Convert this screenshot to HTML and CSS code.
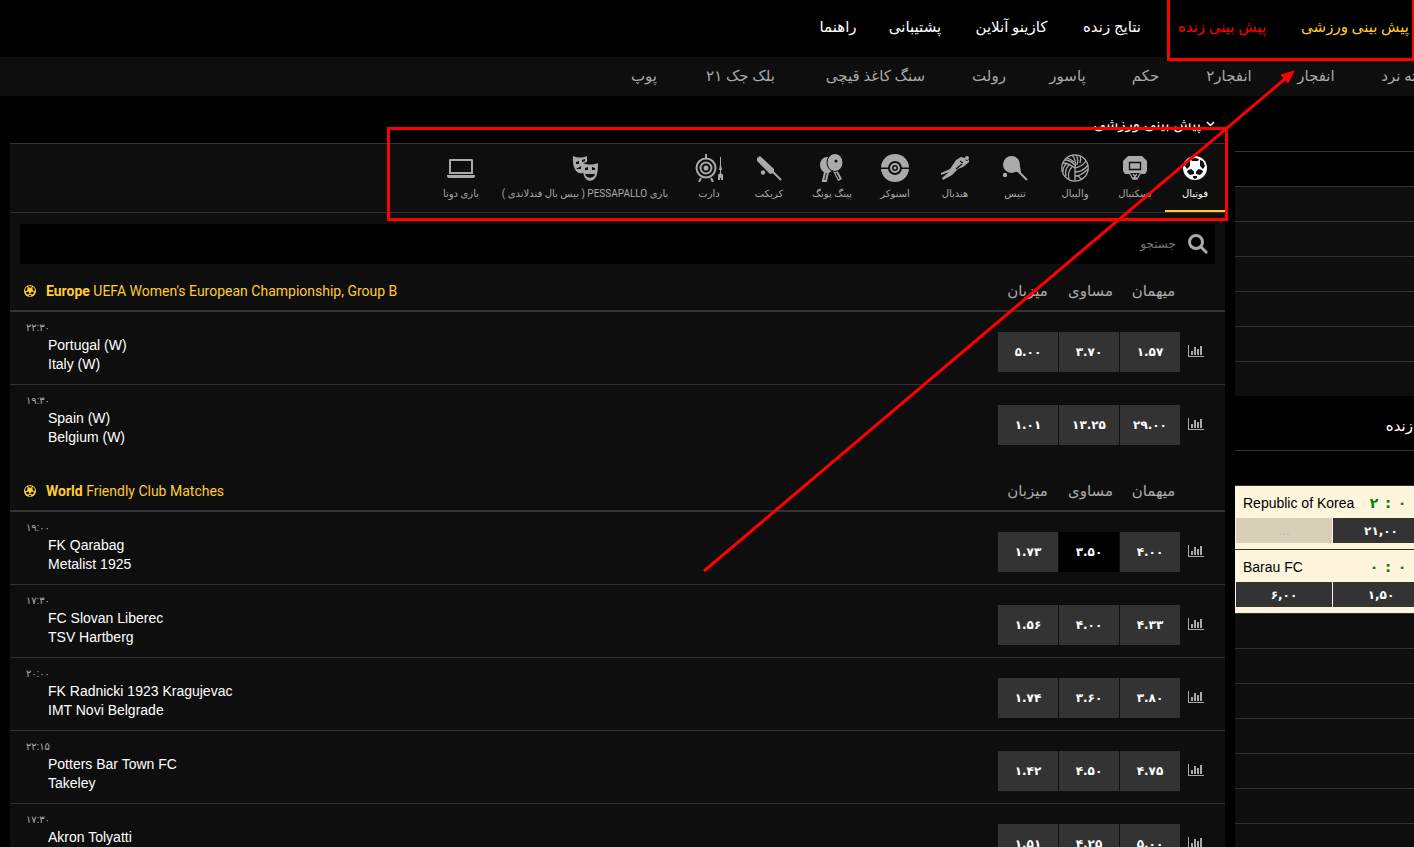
FILE: index.html
```html
<!DOCTYPE html>
<html lang="fa">
<head>
	<meta charset="UTF-8">
	<title>پیش بینی ورزشی</title>
	<link rel="stylesheet" href="styles.css">
</head>
<body>
	<svg class="defs" aria-hidden="true">
		<symbol id="chart" viewBox="0 0 16 13">
			<path d="M0 0h1v11h15v1H0zM3 6h2v4H3zM6 2h2v8H6zM9 4h2v6H9zM12 1h2v9h-2z"/>
		</symbol>
		<symbol id="ball" viewBox="0 0 24 24">
			<circle cx="12" cy="12" r="12"/>
			<path class="cut" d="M7 4L4 5 2 10l2 3 3-3zM17 4l3 1 2 5-2 3-3-3zM8 3l4-1 4 1-1 2H9zM5 14l4-1 2 3v2l-4 1-3-3zM19 14l-4-1-2 3v2l4 1 3-3zM10 20h4v2l-2 1-2-1z"/>
			<path d="M8.500 6h7l2 5-5.500 5-5.500-5z"/>
		</symbol>
	</svg>

	<header class="header" dir="rtl">
		<nav class="topnav">
			<a class="gold" href="#">پیش بینی ورزشی</a>
			<a class="red" href="#">پیش بینی زنده</a>
			<a href="#">نتایج زنده</a>
			<a href="#">کازینو آنلاین</a>
			<a href="#">پشتیبانی</a>
			<a href="#">راهنما</a>
		</nav>
		<nav class="subnav">
			<a href="#">تخته نرد</a>
			<a href="#">انفجار</a>
			<a href="#">انفجار۲</a>
			<a href="#">حکم</a>
			<a href="#">پاسور</a>
			<a href="#">رولت</a>
			<a href="#">سنگ کاغذ قیچی</a>
			<a href="#">بلک جک ۲۱</a>
			<a href="#">پوپ</a>
		</nav>
	</header>

	<div class="page">
		<main class="main">
			<h1 class="title" dir="rtl">
				<svg class="chevron" viewBox="0 0 9 6"><path d="M1 1l3.500 3.500L8 1"/></svg>
				پیش بینی ورزشی
			</h1>
			<div class="panel">
				<nav class="sports" dir="rtl">
					<a class="sport active" href="#">
						<svg viewBox="-2 -2 28 28"><use href="#ball" width="24" height="24"/></svg>
						<span>فوتبال</span>
					</a>
					<a class="sport" href="#">
						<svg viewBox="0 0 28 28"><path d="M7 2h14l5 5v10l-2 3H4l-2-3V7z"/><path class="line dark" d="M8.500 8.500h11v7h-11z"/><path class="cut" d="M9 19h10l-3 7h-4z"/><path class="line" d="M9 20l3 5h4l3-5M12 20l4 5M16 20l-4 5"/></svg>
						<span>بسکتبال</span>
					</a>
					<a class="sport" href="#">
						<svg viewBox="0 0 28 28"><circle class="line" cx="14" cy="14" r="13.200"/><path class="line" d="M14 14C10 11 6 9 2 9M14 14c1-5 0-10-3-13M14 14c5-1 9-4 11-7M14 14v13M14 11C11 8 7 6 4 6M13 8c-2-2-4-3-7-4M16 11c1-3 1-7-1-10M19 9c1-3 1-5 0-7M14 18c5 0 10-3 13-7M14 22c5 0 9-3 13-7M11 13c-3 3-4 8-3 12M8 11c-3 3-4 7-3 11M5 10c-2 2-3 4-3 8M17 21c1 2 2 4 4 4"/></svg>
						<span>والیبال</span>
					</a>
					<a class="sport" href="#">
						<svg viewBox="0 0 28 28"><circle cx="10.500" cy="10.500" r="8.500"/><circle cx="4" cy="21" r="2.200"/><path d="M12 18l7-6 1 6z"/><path class="line thick" d="M16 16l10 10"/></svg>
						<span>تنیس</span>
					</a>
					<a class="sport" href="#">
						<svg viewBox="0 0 28 28"><circle cx="26" cy="4" r="2"/><path d="M28 8l-6 5-5 2-6 6-9 5-1-2 7-6-8 3v-2l9-4 6-9 5-3 4 1 1 3 3-1z"/><path class="line dark" d="M15 15l6-5M19 7l3 2"/></svg>
						<span>هندبال</span>
					</a>
					<a class="sport" href="#">
						<svg viewBox="0 0 28 28"><circle cx="14" cy="14" r="14"/><path class="cut" d="M0 13.500h28v1.500H0z"/><circle class="cut" cx="14" cy="14" r="7"/><circle cx="14" cy="14" r="5"/><circle class="cut" cx="14" cy="14" r="3"/><circle cx="14" cy="14" r="1.500"/></svg>
						<span>اسنوکر</span>
					</a>
					<a class="sport" href="#">
						<svg viewBox="0 0 28 28"><ellipse cx="9" cy="11" rx="7" ry="8"/><path class="line thick" d="M7 18l-2 9h3l2-9"/><path d="M15 17l4-1 5 9-4 2z"/><ellipse class="rim" cx="17" cy="8.500" rx="8" ry="9"/><circle class="cut" cx="18" cy="7" r="1.500"/><path class="line dark" d="M18 19l3 6"/></svg>
						<span>پینگ پونگ</span>
					</a>
					<a class="sport" href="#">
						<svg viewBox="0 0 28 28"><path d="M2 4l3-2 14 13v4l-4 1L2 7z"/><path class="line thick" d="M17 17l9 9"/><circle cx="8" cy="18.500" r="2.200"/></svg>
						<span>کریکت</span>
					</a>
					<a class="sport" href="#">
						<svg viewBox="0 0 28 28"><path class="line thick" d="M11 0v4M6 24l-2 4M16 24l2 4"/><circle class="line thick" cx="11" cy="14" r="9.500"/><circle class="line thick" cx="11" cy="14" r="5.500"/><circle cx="11" cy="14" r="2.500"/><path d="M25 3h1v8l1 5h-3l1-5zM25 16h1v3l2 2v5h-2v-2h-1v2h-2v-5l2-2z"/></svg>
						<span>دارت</span>
					</a>
					<a class="sport" href="#">
						<svg viewBox="0 0 28 28"><path d="M2 2c5 2 9 2 14 0v6l-4 1v10C5 21 1 13 2 2z"/><path d="M12 9c5 2 9 2 15 0 0 10-1 17-8 18-6-1-8-8-7-18z"/><path class="cut" d="M5 8l3-1v3H5zM11 6l3-1v2l-3 1zM5 15l5-3v3zM14 14l3-1v3h-3zM21 13l3 1v2h-3zM14 20h10c-1 5-9 5-10 0z"/></svg>
						<span>بازی PESSAPALLO ( بیس بال فندلاندی )</span>
					</a>
					<a class="sport" href="#">
						<svg viewBox="0 0 28 28"><path d="M3 5h22q1 0 1 1v14H2V6q0-1 1-1zM0 21h28v1q0 2-3 2H3q-3 0-3-2z"/><path class="cut" d="M4 7h20v11H4z"/></svg>
						<span>بازی دوتا</span>
					</a>
				</nav>

				<label class="search" dir="rtl">
					<svg viewBox="0 0 20 20"><circle cx="8" cy="8" r="6.500"/><path d="M13 13l6 6"/></svg>
					<input type="text" placeholder="جستجو" aria-label="جستجو">
				</label>

				<section class="league">
					<h2 class="league-head">
						<svg class="league-icon" viewBox="0 0 24 24"><use href="#ball"/></svg>
						<span class="league-name"><b>Europe</b> UEFA Women's European Championship, Group B</span>
						<span class="cols"><span>میزبان</span><span>مساوی</span><span>میهمان</span></span>
					</h2>
					<div class="match">
						<time>۲۲:۳۰</time>
						<div class="teams">Portugal (W)<br>Italy (W)</div>
						<div class="odds"><button>۵.۰۰</button><button>۳.۷۰</button><button>۱.۵۷</button></div>
						<a class="stats" href="#" aria-label="آمار"><svg><use href="#chart"/></svg></a>
					</div>
					<div class="match">
						<time>۱۹:۳۰</time>
						<div class="teams">Spain (W)<br>Belgium (W)</div>
						<div class="odds"><button>۱.۰۱</button><button>۱۳.۲۵</button><button>۲۹.۰۰</button></div>
						<a class="stats" href="#" aria-label="آمار"><svg><use href="#chart"/></svg></a>
					</div>
				</section>

				<section class="league">
					<h2 class="league-head">
						<svg class="league-icon" viewBox="0 0 24 24"><use href="#ball"/></svg>
						<span class="league-name"><b>World</b> Friendly Club Matches</span>
						<span class="cols"><span>میزبان</span><span>مساوی</span><span>میهمان</span></span>
					</h2>
					<div class="match">
						<time>۱۹:۰۰</time>
						<div class="teams">FK Qarabag<br>Metalist 1925</div>
						<div class="odds"><button>۱.۷۳</button><button class="selected">۳.۵۰</button><button>۴.۰۰</button></div>
						<a class="stats" href="#" aria-label="آمار"><svg><use href="#chart"/></svg></a>
					</div>
					<div class="match">
						<time>۱۷:۳۰</time>
						<div class="teams">FC Slovan Liberec<br>TSV Hartberg</div>
						<div class="odds"><button>۱.۵۶</button><button>۴.۰۰</button><button>۴.۳۳</button></div>
						<a class="stats" href="#" aria-label="آمار"><svg><use href="#chart"/></svg></a>
					</div>
					<div class="match">
						<time>۲۰:۰۰</time>
						<div class="teams">FK Radnicki 1923 Kragujevac<br>IMT Novi Belgrade</div>
						<div class="odds"><button>۱.۷۴</button><button>۳.۶۰</button><button>۳.۸۰</button></div>
						<a class="stats" href="#" aria-label="آمار"><svg><use href="#chart"/></svg></a>
					</div>
					<div class="match">
						<time>۲۲:۱۵</time>
						<div class="teams">Potters Bar Town FC<br>Takeley</div>
						<div class="odds"><button>۱.۴۲</button><button>۴.۵۰</button><button>۴.۷۵</button></div>
						<a class="stats" href="#" aria-label="آمار"><svg><use href="#chart"/></svg></a>
					</div>
					<div class="match">
						<time>۱۷:۳۰</time>
						<div class="teams">Akron Tolyatti</div>
						<div class="odds"><button>۱.۵۱</button><button>۴.۲۵</button><button>۵.۰۰</button></div>
						<a class="stats" href="#" aria-label="آمار"><svg><use href="#chart"/></svg></a>
					</div>
				</section>
			</div>
		</main>

		<aside class="side">
			<div class="side-top"></div>
			<div class="row black"></div>
			<div class="row"></div>
			<div class="row"></div>
			<div class="row"></div>
			<div class="row"></div>
			<div class="row"></div>
			<div class="row last"></div>
			<h2 class="side-title">زنده</h2>
			<div class="row black"></div>
			<div class="live">
				<div class="live-head"><span>Republic of Korea</span><span class="score"><b>۲</b><b>:</b><b>۰</b></span></div>
				<div class="live-odds"><button disabled>...</button><button>۲۱,۰۰</button></div>
			</div>
			<div class="live">
				<div class="live-head"><span>Barau FC</span><span class="score"><b>۰</b><b>:</b><b>۰</b></span></div>
				<div class="live-odds"><button>۶,۰۰</button><button>۱,۵۰</button></div>
			</div>
			<div class="row"></div>
			<div class="row"></div>
			<div class="row"></div>
			<div class="row"></div>
			<div class="row"></div>
			<div class="row"></div>
			<div class="row"></div>
		</aside>
	</div>

	<svg class="marks" width="1414" height="847" aria-hidden="true">
		<rect x="1168.500" y="-5" width="245" height="64.500"/>
		<rect x="388.500" y="128.500" width="838" height="91"/>
		<path d="M704 571L1286 78"/>
		<path class="tip" d="M1294 71l-6 12-7-8z"/>
	</svg>
</body>
</html>
```
FILE: styles.css
```css
*{
	box-sizing: border-box;
}
body{
	margin: 0;
	height: 100vh;
	overflow: hidden;
	position: relative;
	background: #000;
	color: #fff;
	font-family: Roboto, "DejaVu Sans", sans-serif;
	font-size: 14px;
}
a{
	color: inherit;
	text-decoration: none;
}
button{
	border: 0;
	padding: 0;
	background: #333;
	color: #fff;
	font: bold 12px/20px "DejaVu Sans", sans-serif;
}
.defs{
	position: absolute;
	width: 0;
	height: 0;
}
.cut{
	fill: #0e0e0e;
}
.topnav,.subnav{
	display: grid;
	align-items: center;
	white-space: nowrap;
	font-size: 15px;
}
.topnav a,.subnav a{
	display: flex;
	justify-content: center;
}
.topnav{
	height: 57px;
	padding: 0 4px 4px 0;
	grid-template-columns: 110px 96px 64px 77px 56px 38px;
	column-gap: 30px;
	font-weight: 500;
}
.subnav{
	height: 39px;
	margin-right: -18px;
	padding-bottom: 2px;
	grid-template-columns: 52px 38px 46px 31px 35px 32px 105px 75px 28px;
	column-gap: 45px;
	color: #aaa;
}
.header{
	background: linear-gradient(#000 57px, #0e0e0e 57px);
}
.topnav .gold{
	color: #ffcc33;
}
.topnav .red{
	color: #f00;
}
.page{
	display: grid;
	grid-template-columns: minmax(0, 1fr) 179px;
	column-gap: 10px;
	padding-left: 10px;
}
.title{
	display: flex;
	align-items: center;
	gap: 5px;
	height: 47px;
	margin: 0;
	padding: 8px 10px 0;
	font-size: 15px;
	font-weight: normal;
}
.chevron{
	width: 9px;
	height: 6px;
	fill: none;
	stroke: #fff;
	stroke-width: 1.5;
}
.panel{
	background: #0e0e0e;
	border-top: 1px solid #333;
}
.sports{
	display: grid;
	grid-template-columns: repeat(6, 60px) 66px 60px 60px 188px 60px;
	height: 69px;
	border-bottom: 1px solid #333;
	color: #aaa;
	fill: #aaa;
}
.sport{
	display: flex;
	flex-direction: column;
	align-items: center;
	padding-top: 10px;
	gap: 2px;
	font-size: 10px;
	line-height: 20px;
	white-space: nowrap;
}
.sport svg{
	width: 28px;
	height: 28px;
}
.sport.active{
	color: #fff;
	fill: #fff;
	border-bottom: 2px solid #ffcc33;
}
.line{
	fill: none;
	stroke: #aaa;
	stroke-width: 1.3;
}
.thick{
	stroke-width: 2;
}
.dark,.rim{
	stroke: #0e0e0e;
}
.search{
	display: flex;
	align-items: center;
	height: 40px;
	margin: 11px 10px 0;
	padding: 0 7px;
	gap: 12px;
	background: #000;
}
.search svg{
	width: 20px;
	height: 20px;
	fill: none;
	stroke: #aaa;
	stroke-width: 3;
}
.search input{
	flex: 1;
	padding: 0;
	border: 0;
	outline: 0;
	background: none;
	color: #fff;
	font: 12px "DejaVu Sans", sans-serif;
}
.search input::placeholder{
	color: #777;
}
.league{
	padding-bottom: 6px;
}
.league-head{
	display: flex;
	align-items: center;
	height: 48px;
	margin: 0;
	padding: 8px 40px 0 14px;
	border-bottom: 2px solid #333;
	color: #ffcc33;
	font-size: 14px;
	font-weight: normal;
}
.league-icon{
	width: 12px;
	height: 12px;
	margin-right: 10px;
	fill: #ffcc33;
}
.league-name{
	flex: 1;
}
.cols{
	display: grid;
	grid-template-columns: repeat(3, 63px);
	text-align: center;
	color: #aaa;
	font-size: 15px;
}
.match{
	display: grid;
	grid-template-columns: 22px 1fr 182px 24px;
	grid-template-rows: 15px 38px;
	height: 73px;
	padding: 9px 21px 0 16px;
	border-bottom: 1px solid #333;
}
.match:last-child{
	border-bottom-color: transparent;
}
.match time{
	grid-area: 1 / 1 / 2 / 3;
	color: #aaa;
	font-size: 10px;
	line-height: 13px;
}
.teams{
	grid-area: 2 / 2;
	font: 14px/19px "Liberation Sans", Arial, sans-serif;
}
.odds{
	grid-area: 1 / 3 / 3 / 4;
	display: grid;
	grid-template-columns: repeat(3, 60px);
	column-gap: 1px;
	height: 40px;
	margin-top: 11px;
}
.odds .selected{
	background: #000;
}
.stats{
	grid-area: 1 / 4 / 3 / 5;
	padding: 24px 0 0 8px;
}
.stats svg{
	display: block;
	width: 16px;
	height: 13px;
	fill: #aaa;
}
.side{
	overflow: hidden;
}
.side-top{
	height: 56px;
	border-bottom: 1px solid #333;
}
.row{
	height: 35px;
	background: #0e0e0e;
	border-bottom: 1px solid #333;
}
.row.black{
	background: #000;
}
.row.last{
	height: 34px;
	border: 0;
}
.side-title{
	height: 55px;
	margin: 0;
	padding-right: 1px;
	border-bottom: 1px solid #333;
	font-size: 15px;
	font-weight: normal;
	line-height: 60px;
	text-align: right;
}
.live{
	height: 64px;
	border-bottom: 1px solid #333;
	background: #fff5dc;
	color: #000;
}
.live-head{
	display: flex;
	justify-content: space-between;
	height: 32px;
	padding: 0 7px 0 8px;
	font: 14px/34px "Liberation Sans", Arial, sans-serif;
}
.score{
	display: grid;
	grid-template-columns: 10px 10px 10px;
	column-gap: 4px;
	text-align: center;
	color: green;
	font: bold 14px/34px "DejaVu Sans", sans-serif;
}
.live-odds{
	display: grid;
	grid-template-columns: 96px 96px;
	column-gap: 1px;
	padding-left: 1px;
}
.live-odds button{
	height: 25px;
}
.live-odds button:disabled{
	background: #d7cfb8;
	color: #c0b9a5;
	font-weight: normal;
}
.marks{
	position: absolute;
	top: 0;
	left: 0;
	fill: none;
	stroke: #f00;
	stroke-width: 3;
	pointer-events: none;
}
.marks .tip{
	fill: #f00;
	stroke-width: 1;
}
```
